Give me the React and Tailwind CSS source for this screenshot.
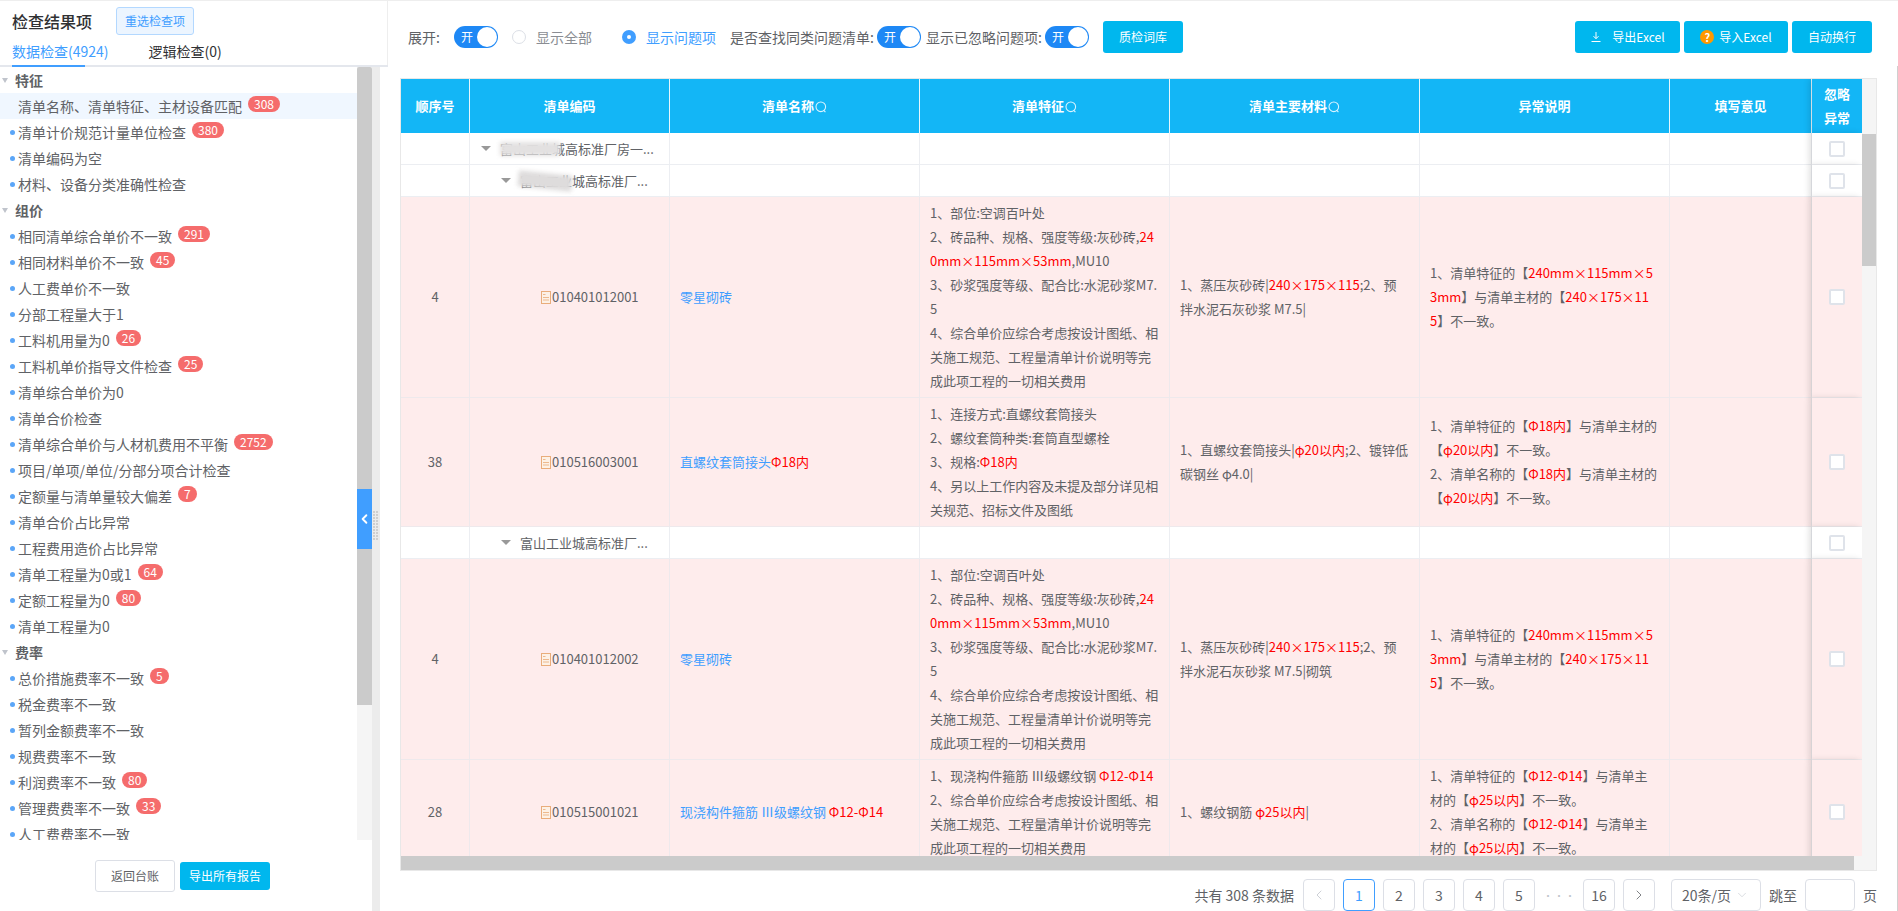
import { ChevronLeft, ChevronRight, ChevronDown } from "lucide-react";

const SECTIONS = [
  {
    title: "特征",
    items: [
      { name: "清单名称、清单特征、主材设备匹配", count: 308, active: true },
      { name: "清单计价规范计量单位检查", count: 380 },
      { name: "清单编码为空" },
      { name: "材料、设备分类准确性检查" },
    ],
  },
  {
    title: "组价",
    items: [
      { name: "相同清单综合单价不一致", count: 291 },
      { name: "相同材料单价不一致", count: 45 },
      { name: "人工费单价不一致" },
      { name: "分部工程量大于1" },
      { name: "工料机用量为0", count: 26 },
      { name: "工料机单价指导文件检查", count: 25 },
      { name: "清单综合单价为0" },
      { name: "清单合价检查" },
      { name: "清单综合单价与人材机费用不平衡", count: 2752 },
      { name: "项目/单项/单位/分部分项合计检查" },
      { name: "定额量与清单量较大偏差", count: 7 },
      { name: "清单合价占比异常" },
      { name: "工程费用造价占比异常" },
      { name: "清单工程量为0或1", count: 64 },
      { name: "定额工程量为0", count: 80 },
      { name: "清单工程量为0" },
    ],
  },
  {
    title: "费率",
    items: [
      { name: "总价措施费率不一致", count: 5 },
      { name: "税金费率不一致" },
      { name: "暂列金额费率不一致" },
      { name: "规费费率不一致" },
      { name: "利润费率不一致", count: 80 },
      { name: "管理费费率不一致", count: 33 },
      { name: "人工费费率不一致" },
    ],
  },
];

const Red = ({ children }) => <span className="text-[#ff0000]">{children}</span>;

const TZ_BRICK = (
  <>
    1、部位:空调百叶处<br />
    2、砖品种、规格、强度等级:灰砂砖,<Red>240mm×115mm×53mm</Red>,MU10<br />
    3、砂浆强度等级、配合比:水泥砂浆M7.5<br />
    4、综合单价应综合考虑按设计图纸、相关施工规范、工程量清单计价说明等完成此项工程的一切相关费用
  </>
);

const YC_BRICK = (
  <>
    1、清单特征的【<Red>240mm×115mm×53mm</Red>】与清单主材的【<Red>240×175×115</Red>】不一致。
  </>
);

function Triangle() {
  return <span className="w-0 h-0 border-x-[5px] border-t-[5px] border-x-transparent border-t-[#999] shrink-0" />;
}

function Toggle() {
  return (
    <span className="w-[44px] h-[22px] rounded-full bg-[#1e88f5] flex items-center justify-between pl-[7px] pr-[1px] shrink-0">
      <span className="text-[12px] text-white">开</span>
      <span className="w-[20px] h-[20px] rounded-full bg-white" />
    </span>
  );
}

function SearchMark() {
  return (
    <svg width="12" height="13" viewBox="0 0 12 13" className="inline-block ml-[1px]" fill="none" stroke="#d8f3ff" strokeWidth="1.1">
      <circle cx="5.8" cy="5.8" r="4.8" />
      <path d="M8.8 9.4l1.6 1.8" />
    </svg>
  );
}

function DocIcon() {
  return (
    <svg width="10" height="13" viewBox="0 0 10 13" className="shrink-0 mr-[1px]">
      <rect x="0.5" y="0.5" width="9" height="12" fill="#fdf1e6" stroke="#e9ad7b" />
      <path d="M2 3.5h2.5M2 6.5h6M2 9h6" stroke="#edb98e" strokeWidth="1" />
    </svg>
  );
}

function Check() {
  return <span className="block mx-auto w-[16px] h-[16px] bg-white border-2 border-[#dfe3ea] rounded-[2px]" />;
}

function BlueBtn({ className = "", children }) {
  return (
    <button className={"h-[32px] rounded-[3px] bg-[#00b7ee] text-white text-[12px] flex items-center justify-center " + className}>
      {children}
    </button>
  );
}

function Th({ children, search }) {
  return (
    <th className="bg-[#13b6f6] border-r border-[#e6f6fd] text-white text-[13px] font-bold text-center h-[54px] p-0">
      {children}
      {search && <SearchMark />}
    </th>
  );
}

function GroupRow({ pl, text, blur }) {
  return (
    <tr>
      <td className="h-[32px] border-r border-b border-[#eceef2] bg-white" />
      <td className="h-[32px] border-r border-b border-[#eceef2] bg-white">
        <div className="flex items-center" style={{ paddingLeft: pl }}>
          <Triangle />
          <span className="relative ml-[9px] whitespace-nowrap">
            {text}
            {blur}
          </span>
        </div>
      </td>
      <td className="border-r border-b border-[#eceef2] bg-white" />
      <td className="border-r border-b border-[#eceef2] bg-white" />
      <td className="border-r border-b border-[#eceef2] bg-white" />
      <td className="border-r border-b border-[#eceef2] bg-white" />
      <td className="border-r border-b border-[#eceef2] bg-white" />
      <td className="relative border-b border-[#eceef2] bg-white shadow-[-3px_0_6px_rgba(0,0,0,0.12)]">
        <Check />
      </td>
    </tr>
  );
}

function DataRow({ no, code, name, tz, cl, yc, h }) {
  const td = "border-r border-b border-[#eee9ec] bg-[#feecec] align-middle";
  return (
    <tr style={{ height: h }}>
      <td className={td + " text-center"}>{no}</td>
      <td className={td}>
        <div className="flex items-center pl-[71px]">
          <DocIcon />
          {code}
        </div>
      </td>
      <td className={td + " pl-[10px] text-[#409eff]"}>{name}</td>
      <td className={td + " px-[10px] py-[4px] break-all"}>{tz}</td>
      <td className={td + " px-[10px] py-[4px] break-all"}>{cl}</td>
      <td className={td + " px-[10px] py-[4px] break-all"}>{yc}</td>
      <td className={td} />
      <td className="relative border-b border-[#eee9ec] bg-[#feecec] shadow-[-3px_0_6px_rgba(0,0,0,0.12)]">
        <Check />
      </td>
    </tr>
  );
}

function PageBtn({ children, active }) {
  return (
    <span
      className={
        "w-[32px] h-[32px] rounded-[4px] border flex items-center justify-center text-[14px] " +
        (active ? "border-[#409eff] text-[#409eff]" : "border-[#dcdfe6] text-[#606266]")
      }
    >
      {children}
    </span>
  );
}

function Sidebar() {
  return (
    <div className="w-[388px] shrink-0 flex flex-col">
      <div className="h-[65px] border-r border-[#eeeeee] pl-[12px] relative">
        <div className="flex items-center h-[34px] pt-[6px]">
          <span className="text-[16px] font-medium text-[#303133] leading-[28px]">检查结果项</span>
          <button className="ml-[24px] w-[78px] h-[28px] bg-[#ecf5ff] border border-[#b3d8ff] rounded-[3px] text-[12px] text-[#409eff]">
            重选检查项
          </button>
        </div>
        <div className="flex mt-[4px] text-[14px] leading-[24px]">
          <span className="text-[#409eff]">数据检查(4924)</span>
          <span className="ml-[40px] text-[#303133]">逻辑检查(0)</span>
        </div>
      </div>
      <div className="flex flex-1 min-h-0 border-t-2 border-[#e4e7ed] relative -mt-[1px]">
        <span className="absolute left-[12px] -top-[2px] w-[73px] h-[2px] bg-[#409eff]" />
        <div className="w-[372px] flex flex-col">
          <div className="flex h-[773px] relative">
            <div className="w-[357px] overflow-hidden">
              {SECTIONS.map((s) => (
                <div key={s.title}>
                  <div className="h-[26px] flex items-center">
                    <span className="ml-[2px] w-0 h-0 border-x-[3.5px] border-t-[5px] border-x-transparent border-t-[#c0c4cc]" />
                    <span className="ml-[7px] text-[14px] font-bold text-[#606266]">{s.title}</span>
                  </div>
                  {s.items.map((it) => (
                    <div key={it.name} className={"h-[26px] flex items-center relative pl-[18px] " + (it.active ? "bg-[#f0f7ff]" : "")}>
                      {!it.active && <span className="absolute left-[10px] top-[11px] w-[5px] h-[5px] rounded-full bg-[#5ba6f8]" />}
                      <span className="text-[14px] text-[#606266] whitespace-nowrap">{it.name}</span>
                      {it.count && (
                        <span className="ml-[6px] mb-[4px] h-[16px] px-[6px] rounded-full bg-[#f56c6c] text-white text-[12px] leading-[16px]">
                          {it.count}
                        </span>
                      )}
                    </div>
                  ))}
                </div>
              ))}
            </div>
            <div className="w-[15px] bg-[#f5f5f5]">
              <div className="h-[638px] bg-[#cbcbcb] rounded-t-[2px]" />
            </div>
            <button className="absolute right-0 top-[422px] w-[15px] h-[60px] bg-[#409eff] flex items-center justify-center">
              <ChevronLeft size={16} strokeWidth={3} color="#fff" />
            </button>
          </div>
          <div className="flex items-center gap-[5px] pl-[95px] mt-[20px]">
            <button className="w-[80px] h-[32px] border border-[#dcdfe6] rounded-[3px] text-[12px] text-[#606266] bg-white">返回台账</button>
            <button className="w-[90px] h-[28px] rounded-[3px] bg-[#00b7ee] text-[12px] text-white">导出所有报告</button>
          </div>
        </div>
        <div className="w-[8px] bg-[#ececec] relative">
          <svg width="6" height="30" className="absolute left-[1px] top-[444px]" fill="#cfcfcf">
            {[0, 1, 2, 3, 4, 5, 6, 7, 8, 9].map((i) => (
              <g key={i}>
                <rect x="0" y={i * 3} width="2" height="2" />
                <rect x="3" y={i * 3} width="2" height="2" />
              </g>
            ))}
          </svg>
        </div>
      </div>
    </div>
  );
}

function Toolbar() {
  return (
    <div className="flex items-center h-[32px] mt-[20px] mb-[25px] pl-[20px] pr-[25px] text-[14px] text-[#606266] whitespace-nowrap">
      <span className="w-[33px]">展开:</span>
      <span className="ml-[13px]"><Toggle /></span>
      <span className="ml-[14px] w-[14px] h-[14px] rounded-full border border-[#dcdfe6] bg-white" />
      <span className="ml-[10px] w-[56px] text-[#8a8d93]">显示全部</span>
      <span className="ml-[30px] w-[14px] h-[14px] rounded-full bg-[#409eff] flex items-center justify-center">
        <span className="w-[4px] h-[4px] rounded-full bg-white" />
      </span>
      <span className="ml-[10px] w-[70px] text-[#409eff]">显示问题项</span>
      <span className="ml-[14px] w-[145px]">是否查找同类问题清单:</span>
      <span className="ml-[2px]"><Toggle /></span>
      <span className="ml-[5px] w-[117px]">显示已忽略问题项:</span>
      <span className="ml-[2px]"><Toggle /></span>
      <BlueBtn className="ml-[14px] w-[80px]">质检词库</BlueBtn>
      <div className="ml-auto flex gap-[4px]">
        <BlueBtn className="w-[105px]">
          <svg width="12" height="12" viewBox="0 0 12 12" fill="none" stroke="#fff" strokeWidth="1" className="mr-[10px]">
            <path d="M6 1v6.5M3.5 5.2L6 7.7l2.5-2.5M1.5 10.5h9" />
          </svg>
          导出Excel
        </BlueBtn>
        <BlueBtn className="w-[104px]">
          <span className="w-[14px] h-[14px] rounded-full bg-[#ff9800] text-white text-[11px] font-bold leading-[14px] text-center mr-[5px]">?</span>
          导入Excel
        </BlueBtn>
        <BlueBtn className="w-[80px]">自动换行</BlueBtn>
      </div>
    </div>
  );
}

function ResultTable() {
  return (
    <div className="ml-[12px] w-[1477px] h-[793px] border border-[#e8e8e8] flex flex-col">
      <div className="flex flex-1 min-h-0">
        <div className="w-[1461px] overflow-hidden">
          <table className="table-fixed border-separate border-spacing-0 w-[1461px] text-[13px] leading-[24px] text-[#606266]">
            <colgroup>
              <col className="w-[69px]" />
              <col className="w-[200px]" />
              <col className="w-[250px]" />
              <col className="w-[250px]" />
              <col className="w-[250px]" />
              <col className="w-[250px]" />
              <col className="w-[142px]" />
              <col className="w-[50px]" />
            </colgroup>
            <thead>
              <tr>
                <Th>顺序号</Th>
                <Th>清单编码</Th>
                <Th search>清单名称</Th>
                <Th search>清单特征</Th>
                <Th search>清单主要材料</Th>
                <Th>异常说明</Th>
                <Th>填写意见</Th>
                <th className="relative bg-[#13b6f6] text-white text-[13px] font-bold text-center p-0 shadow-[-3px_0_6px_rgba(0,0,0,0.12)]">
                  忽略<br />异常
                </th>
              </tr>
            </thead>
            <tbody>
              <GroupRow
                pl={11}
                text="富山工业城高标准厂房一..."
                blur={<span className="absolute left-0 top-[5px] w-[60px] h-[14px] bg-[#e3e1e1] blur-[2px]" />}
              />
              <GroupRow
                pl={31}
                text="富山工业城高标准厂..."
                blur={<span className="absolute left-[-2px] top-[4px] w-[54px] h-[16px] bg-[#dedcdc] blur-[2px] rotate-6" />}
              />
              <DataRow
                h={200}
                no="4"
                code="010401012001"
                name="零星砌砖"
                tz={TZ_BRICK}
                cl={<>1、蒸压灰砂砖|<Red>240×175×115</Red>;2、预拌水泥石灰砂浆 M7.5|</>}
                yc={YC_BRICK}
              />
              <DataRow
                h={128}
                no="38"
                code="010516003001"
                name={<>直螺纹套筒接头<Red>Φ18内</Red></>}
                tz={
                  <>
                    1、连接方式:直螺纹套筒接头<br />
                    2、螺纹套筒种类:套筒直型螺栓<br />
                    3、规格:<Red>Φ18内</Red><br />
                    4、另以上工作内容及未提及部分详见相关规范、招标文件及图纸
                  </>
                }
                cl={<>1、直螺纹套筒接头|<Red>φ20以内</Red>;2、镀锌低碳钢丝 φ4.0|</>}
                yc={
                  <>
                    1、清单特征的【<Red>Φ18内</Red>】与清单主材的【<Red>φ20以内</Red>】不一致。<br />
                    2、清单名称的【<Red>Φ18内</Red>】与清单主材的【<Red>φ20以内</Red>】不一致。
                  </>
                }
              />
              <GroupRow pl={31} text="富山工业城高标准厂..." />
              <DataRow
                h={200}
                no="4"
                code="010401012002"
                name="零星砌砖"
                tz={TZ_BRICK}
                cl={<>1、蒸压灰砂砖|<Red>240×175×115</Red>;2、预拌水泥石灰砂浆 M7.5|砌筑</>}
                yc={YC_BRICK}
              />
              <DataRow
                h={105}
                no="28"
                code="010515001021"
                name={<>现浇构件箍筋 Ⅲ级螺纹钢 <Red>Φ12-Φ14</Red></>}
                tz={
                  <>
                    1、现浇构件箍筋 Ⅲ级螺纹钢 <Red>Φ12-Φ14</Red><br />
                    2、综合单价应综合考虑按设计图纸、相关施工规范、工程量清单计价说明等完成此项工程的一切相关费用
                  </>
                }
                cl={<>1、螺纹钢筋 <Red>φ25以内</Red>|</>}
                yc={
                  <>
                    1、清单特征的【<Red>Φ12-Φ14</Red>】与清单主材的【<Red>φ25以内</Red>】不一致。<br />
                    2、清单名称的【<Red>Φ12-Φ14</Red>】与清单主材的【<Red>φ25以内</Red>】不一致。
                  </>
                }
              />
            </tbody>
          </table>
        </div>
        <div className="w-[14px] bg-[#f5f5f5] pt-[55px]">
          <div className="h-[132px] bg-[#cbcbcb]" />
        </div>
      </div>
      <div className="h-[14px] bg-[#f5f5f5] shrink-0">
        <div className="w-[1453px] h-full bg-[#cbcbcb]" />
      </div>
    </div>
  );
}

function Pagination() {
  return (
    <div className="ml-[12px] w-[1477px] h-[32px] mt-[8px] flex items-center justify-end text-[14px] text-[#606266] whitespace-nowrap">
      <span className="mr-[9px]">共有 308 条数据</span>
      <div className="flex gap-[8px] items-center">
        <PageBtn><ChevronLeft size={16} strokeWidth={1.2} color="#c0c4cc" /></PageBtn>
        <PageBtn active>1</PageBtn>
        <PageBtn>2</PageBtn>
        <PageBtn>3</PageBtn>
        <PageBtn>4</PageBtn>
        <PageBtn>5</PageBtn>
        <span className="w-[32px] text-center text-[10px] tracking-[1px] text-[#c0c4cc]">•••</span>
        <PageBtn>16</PageBtn>
        <PageBtn><ChevronRight size={16} strokeWidth={1.2} color="#606266" /></PageBtn>
      </div>
      <span className="ml-[16px] w-[90px] h-[32px] rounded-[4px] border border-[#dcdfe6] flex items-center pl-[10px]">
        20条/页
        <ChevronDown size={14} strokeWidth={1} color="#c0c4cc" className="ml-[4px]" />
      </span>
      <span className="ml-[8px]">跳至</span>
      <span className="ml-[8px] w-[50px] h-[32px] rounded-[4px] border border-[#dcdfe6]" />
      <span className="ml-[8px]">页</span>
    </div>
  );
}

export default function App() {
  return (
    <div className="w-[1898px] h-[911px] overflow-hidden flex border-t border-[#eeeeee] bg-white font-['Noto_Sans_CJK_SC','Liberation_Sans',sans-serif]">
      <Sidebar />
      <div className="w-[1509px] shrink-0">
        <Toolbar />
        <ResultTable />
        <Pagination />
      </div>
      <div className="w-[1px] mt-[65px] bg-[#d0d0d0]" />
    </div>
  );
}
